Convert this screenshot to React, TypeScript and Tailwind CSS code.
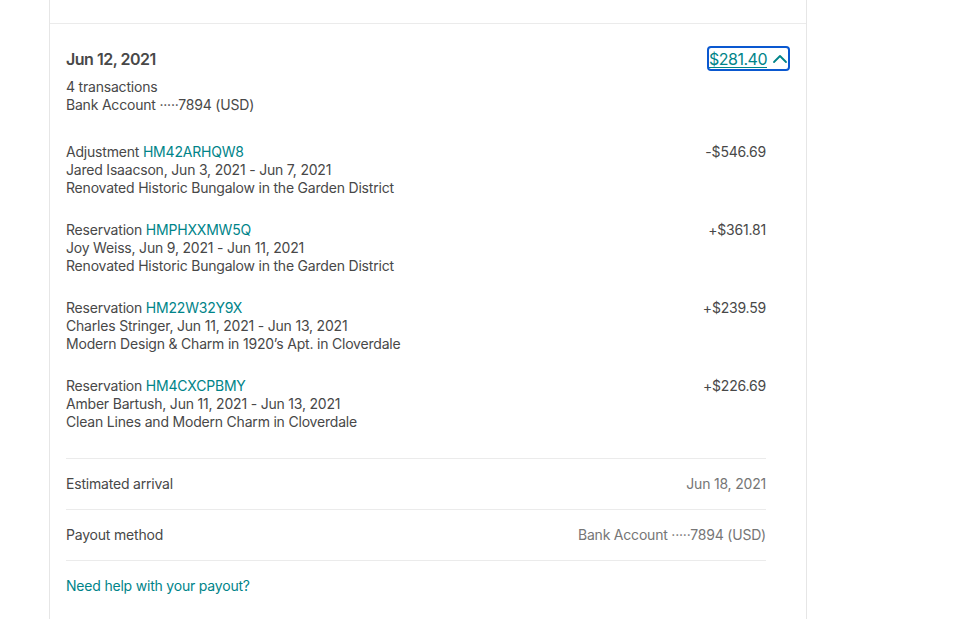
import React from "react";

const transactions = [
  {
    type: "Adjustment",
    code: "HM42ARHQW8",
    guest: "Jared Isaacson, Jun 3, 2021 - Jun 7, 2021",
    listing: "Renovated Historic Bungalow in the Garden District",
    amount: "-$546.69",
  },
  {
    type: "Reservation",
    code: "HMPHXXMW5Q",
    guest: "Joy Weiss, Jun 9, 2021 - Jun 11, 2021",
    listing: "Renovated Historic Bungalow in the Garden District",
    amount: "+$361.81",
  },
  {
    type: "Reservation",
    code: "HM22W32Y9X",
    guest: "Charles Stringer, Jun 11, 2021 - Jun 13, 2021",
    listing: "Modern Design & Charm in 1920’s Apt. in Cloverdale",
    amount: "+$239.59",
  },
  {
    type: "Reservation",
    code: "HM4CXCPBMY",
    guest: "Amber Bartush, Jun 11, 2021 - Jun 13, 2021",
    listing: "Clean Lines and Modern Charm in Cloverdale",
    amount: "+$226.69",
  },
];

export default function App() {
  return (
    <div
      className="min-h-[619px] bg-white text-[#484848] tracking-[-0.2px]"
      style={{ fontFamily: "Inter, 'Noto Sans', sans-serif" }}
    >
      <div className="ml-[49px] w-[758px] min-h-[619px] border-x border-[#e6e6e6]">
        {/* previous payout, cut off above */}
        <div className="h-[24px] border-b border-[#ebebeb]" />

        <div className="px-4 pt-[23px]">
          {/* header */}
          <div className="flex items-center justify-between h-[23px]">
            <h2 className="text-[16px] font-semibold leading-[22px] tracking-[-0.5px] text-[#484848]">Jun 12, 2021</h2>
            <button className="flex items-center gap-[5px] h-[21px] pl-0 pr-0 mr-[2px] rounded-[2px] outline-2 outline-[#0a58d0] outline-offset-0 text-[#008489] text-[16px] leading-[20px] tracking-[-0.5px]">
              <span className="underline underline-offset-2">$281.40</span>
              <svg width="16" height="16" viewBox="0 0 16 16" fill="none" stroke="#008489" strokeWidth="1.8" strokeLinecap="round" strokeLinejoin="round">
                <path d="M2 11 L8 5 L14 11" />
              </svg>
            </button>
          </div>

          <div className="mt-[8px] text-[14px] leading-[18px]">
            <div>4 transactions</div>
            <div>Bank Account ·····7894 (USD)</div>
          </div>

          <div className="pr-6">
            <div className="mt-[29px] flex flex-col gap-[24px]">
              {transactions.map((t) => (
                <div key={t.code} className="flex justify-between text-[14px] leading-[18px]">
                  <div>
                    <div>
                      {t.type} <span className="text-[#008489]">{t.code}</span>
                    </div>
                    <div>{t.guest}</div>
                    <div>{t.listing}</div>
                  </div>
                  <div className="text-right">{t.amount}</div>
                </div>
              ))}
            </div>

            <div className="mt-[27px] border-t border-[#ebebeb]">
              <div className="flex justify-between py-[16px] text-[14px] leading-[18px] border-b border-[#ebebeb]">
                <span>Estimated arrival</span>
                <span className="text-[#767676]">Jun 18, 2021</span>
              </div>
              <div className="flex justify-between py-[16px] text-[14px] leading-[18px] border-b border-[#ebebeb]">
                <span>Payout method</span>
                <span className="text-[#767676]">Bank Account ·····7894 (USD)</span>
              </div>
              <div className="py-[16px] text-[14px] leading-[18px]">
                <a href="#" className="text-[#008489]">Need help with your payout?</a>
              </div>
            </div>
          </div>
        </div>
      </div>
    </div>
  );
}
